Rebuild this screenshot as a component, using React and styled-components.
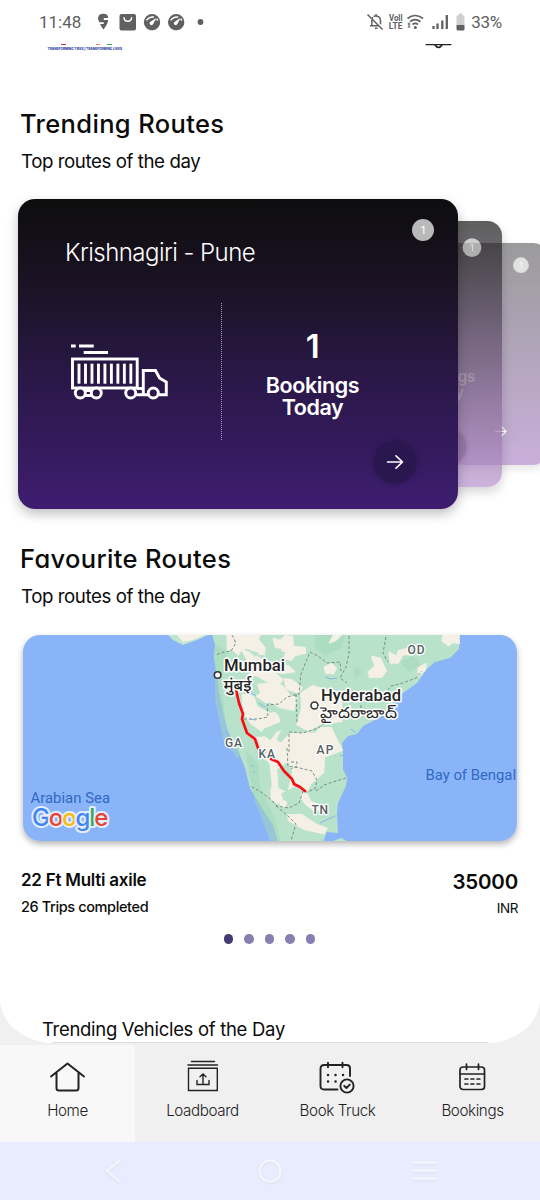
import React from 'react';
import styled, { createGlobalStyle } from 'styled-components';

const GlobalStyle = createGlobalStyle`
  * { box-sizing: border-box; }
  body { margin: 0; background: #fff; }
`;

const inter = 'Inter, "Liberation Sans", sans-serif';

const Screen = styled.div`
  width: 540px;
  height: 1200px;
  display: flex;
  flex-direction: column;
  overflow: hidden;
  background: #f0f0f0;
  font-family: ${inter};
  color: #0b0b0b;
`;

const StatusBar = styled.header`
  height: 44px;
  flex: none;
  display: flex;
  align-items: center;
  justify-content: space-between;
  padding: 0 38px 0 39px;
  background: #fff;
  color: #606060;
  font: 400 17px Roboto, sans-serif;
`;

const StatusGroup = styled.div`
  display: flex;
  align-items: center;
  height: 44px;
  gap: ${(p) => p.$gap || 0}px;
`;

const Clock = styled.span`
  width: 57px;
`;

const Percent = styled.span`
  letter-spacing: -0.3px;
`;

const Page = styled.main`
  flex: none;
  height: 999px;
  background: #fff;
  border-radius: 0 0 54px 54px / 0 0 44px 44px;
  display: flex;
  flex-direction: column;
`;

const HeaderPeek = styled.div`
  height: 8px;
  display: flex;
  justify-content: space-between;
  padding: 0 88px 0 47px;
`;

const Section = styled.section`
  padding: 0 22px 0 21px;
  margin-top: ${(p) => p.$top}px;
`;

const Title = styled.h2`
  margin: 0 0 0 -1px;
  font: 450 25.5px/36px ${inter};
  font-feature-settings: "cv11" 1;
  letter-spacing: 0.35px;
`;

const Subtitle = styled.p`
  margin: 8px 0 0;
  font: 400 18.7px/24px ${inter};
  letter-spacing: -0.43px;
`;

const CardStack = styled.div`
  position: relative;
  height: 310px;
  margin: 25px 0 0 18px;
`;

const Card = styled.article`
  position: absolute;
  top: 0;
  left: ${(p) => p.$left}px;
  width: 440px;
  height: 310px;
  border-radius: 17px;
  padding: 20px 24px 22px 48px;
  display: grid;
  grid-template-columns: 156px 1fr;
  grid-template-rows: 66px 1fr;
  color: #fff;
  background: ${(p) => p.$fill};
  opacity: ${(p) => p.$opacity};
  transform: scale(${(p) => p.$scale});
  transform-origin: right center;
  box-shadow: 0 5px 12px rgba(0, 0, 0, 0.25);
`;

const CardHead = styled.div`
  grid-column: 1 / 3;
  display: flex;
  align-items: flex-start;
  justify-content: space-between;
`;

const RouteName = styled.h3`
  margin: 17px 0 0 -1px;
  font: 350 24px/34px ${inter};
  letter-spacing: -0.55px;
`;

const Badge = styled.span`
  width: 22px;
  height: 22px;
  border-radius: 50%;
  background: #b9b9b9;
  font: 400 11px/22px ${inter};
  text-align: center;
`;

const Vehicle = styled.div`
  margin: 18px 0 49px;
  height: 137px;
  padding: 39px 0 0 4px;
  border-right: 1px dotted #a59ab8;
`;

const Stats = styled.div`
  display: flex;
  flex-direction: column;
  align-items: center;
  padding: 40px 31px 0 0;
  font: 600 21.5px/22px ${inter};
  letter-spacing: -0.4px;
  text-align: center;
`;

const Count = styled.strong`
  font: 600 33px/42px ${inter};
  margin-bottom: 7px;
`;

const StatLabel = styled.span`
  white-space: pre-line;
`;

const GoButton = styled.button`
  position: absolute;
  right: 42px;
  bottom: 26px;
  width: 42px;
  height: 42px;
  border: 0;
  border-radius: 50%;
  padding: 0;
  display: grid;
  place-items: center;
  background: ${(p) => p.$tint};
  box-shadow: 0 0 4px 1px ${(p) => p.$tint};
`;

const MapFrame = styled.div`
  width: 494px;
  height: 206px;
  margin: 26px 0 0 2px;
  border-radius: 17px;
  overflow: hidden;
  box-shadow: 0 3px 6px rgba(0, 0, 0, 0.3);
  svg { display: block; }
`;

const TripRow = styled.div`
  display: flex;
  justify-content: space-between;
  margin-top: 27px;
`;

const TripSide = styled.div`
  display: flex;
  flex-direction: column;
  align-items: ${(p) => (p.$end ? 'flex-end' : 'flex-start')};
`;

const VehicleName = styled.span`
  font: 600 17px/24px ${inter};
  letter-spacing: -0.25px;
`;

const Trips = styled.span`
  margin-top: 4px;
  font: 450 14.5px/22px ${inter};
  letter-spacing: -0.38px;
`;

const Price = styled.span`
  margin-top: 1px;
  font: 600 20.5px/26px ${inter};
  letter-spacing: -0.2px;
`;

const Currency = styled.span`
  margin-top: 3px;
  font: 400 13.5px/20px ${inter};
  letter-spacing: -0.4px;
`;

const Dots = styled.div`
  display: flex;
  gap: 11px;
  justify-content: center;
  margin: 16px 0 0;
`;

const Dot = styled.i`
  width: 9.6px;
  height: 9.6px;
  border-radius: 50%;
  background: ${(p) => (p.$on ? '#443b72' : '#8580b0')};
`;

const NextSection = styled.h4`
  margin: 72px 0 0;
  padding-left: 42px;
  font: 400 18.5px/26px ${inter};
  letter-spacing: -0.3px;
`;

const Divider = styled.div`
  height: 1px;
  margin: auto 52px 0;
  background: #dedede;
`;

const TabBar = styled.nav`
  flex: none;
  height: 97px;
  margin-top: 2px;
  display: grid;
  grid-template-columns: repeat(4, 135px);
  background: #f0f0f0;
`;

const Tab = styled.div`
  display: flex;
  flex-direction: column;
  align-items: center;
  padding-top: 14px;
  background: ${(p) => (p.$active ? '#f8f8f8' : 'transparent')};
  color: #222;
  font: 300 15.2px/20px ${inter};
  letter-spacing: -0.4px;
  svg { display: block; margin-bottom: 5px; }
`;

const SystemNav = styled.footer`
  flex: 1;
  display: grid;
  grid-template-columns: 226px 88px 1fr;
  justify-items: center;
  align-items: center;
  padding-right: 4px;
  background: #e9ecff;
  svg { filter: drop-shadow(0 1px 1px #dcdeec); }
`;

const line = { fill: 'none', stroke: 'currentColor', strokeLinecap: 'round', strokeLinejoin: 'round' };

function Gauge() {
  return (
    <svg width="17" height="17" viewBox="0 0 17 17">
      <circle cx="8.5" cy="8.5" r="8.2" fill="#606060" />
      <path d="M3 6.7Q5.5 2.8 10.5 3.3M13.2 5.2l.9 1.7" fill="none" stroke="#fff" strokeWidth="1.5" />
      <path d="M13 4 9.8 10A1.9 1.9 0 1 1 7.4 7.7Z" fill="#fff" />
    </svg>
  );
}

function Status() {
  return (
    <StatusBar>
      <StatusGroup>
        <Clock>11:48</Clock>
        <svg width="113" height="20" viewBox="96 12 113 20">
          <path d="M103.3 13.8q4.8 0 4.9 4.3h-4.4v1.8h4.3q0 3.6-4.7 9.6-2.3-2.9-3.3-5.4h3.7v-1.9h-4.4q-1.5-2.2-1.3-4.2.4-4.2 5.2-4.2Z" fill="#606060" />
          <rect x="119.5" y="14" width="16.5" height="16.5" rx="2" fill="#606060" />
          <path d="M124 17.2q0 4 3.8 4t3.8-4" fill="none" stroke="#fff" strokeWidth="1.5" />
          <g transform="translate(143.5 13.7)"><Gauge /></g>
          <g transform="translate(167.7 13.7)"><Gauge /></g>
          <circle cx="200.5" cy="22" r="2.9" fill="#606060" />
        </svg>
      </StatusGroup>
      <StatusGroup $gap={5}>
        <svg width="99" height="20" viewBox="367 12 99 20">
          <g {...line} stroke="#606060" strokeWidth="1.5" strokeLinecap="butt">
            <path d="M367.5 14.5l15 15M370 25.8h9M371.8 25.5V20.5q0-2 1-3.2M373.5 16.3q6.6-1.4 7 4.3v3.6M376 14v2M374.8 28.3h2.8" />
          </g>
          <g fontFamily="Roboto, sans-serif" fontSize="8.2" fontWeight="700" fill="#606060">
            <text x="389" y="20.8" textLength="13.5" lengthAdjust="spacingAndGlyphs">Voll</text>
            <text x="388.8" y="28.8" textLength="13.7" lengthAdjust="spacingAndGlyphs">LTE</text>
          </g>
          <g {...line} stroke="#606060" strokeWidth="1.7" strokeLinecap="butt">
            <path d="M407.5 18.5q7.5-6 15.5 0M410 21.7q5-4 10.5 0M412.5 24.5q2.8-2.2 5.5 0" />
          </g>
          <circle cx="415.3" cy="27.5" r="1.5" fill="#606060" />
          <path d="M409 22.5v5M407.7 24h2.6M407.7 27h2.6" stroke="#606060" strokeWidth="1.1" />
          <path d="M433.5 29v-3M437.5 29v-5.5M442.3 29v-8.5M446.8 29V15" stroke="#606060" strokeWidth="2.3" />
          <path d="M459 15v-1.5h3V15q2.5 0 2.5 1.8V25h-8v-8.2q0-1.8 2.5-1.8Z" fill="#cfcfcf" />
          <path d="M456.5 25h8v4q0 1.5-1.5 1.5h-5q-1.5 0-1.5-1.5Z" fill="#606060" />
        </svg>
        <Percent>33%</Percent>
      </StatusGroup>
    </StatusBar>
  );
}

function Truck() {
  return (
    <svg width="100" height="60" viewBox="70 342 100 60" fill="none" stroke="#fff" strokeWidth="2.9">
      <path d="M71 346h4.7M79 346h14.7M83.7 352.5H108M158.5 394.7h7.8V382l-6.8-4-4-7.5h-12.2v24.2h5M135 394.7h8M85 390.5h7M85 395.5h7" />
      <rect x="72.5" y="359" width="64.7" height="29" />
      {[0, 1, 2, 3, 4, 5, 6, 7, 8].map((i) => (
        <path key={i} d={`M${79 + i * 6.48} 363.7v20`} />
      ))}
      <path d="M137 388.5h6" />
      {[80.3, 96.3, 130.7, 153.3].map((x) => (
        <circle key={x} cx={x} cy="393" r="5" fill="#2b184c" />
      ))}
    </svg>
  );
}

function BookingCard({ route, count, tint, ...look }) {
  return (
    <Card {...look}>
      <CardHead>
        <RouteName>{route}</RouteName>
        <Badge>1</Badge>
      </CardHead>
      <Vehicle><Truck /></Vehicle>
      <Stats>
        <Count>{count}</Count>
        <StatLabel>{'Bookings\nToday'}</StatLabel>
      </Stats>
      <GoButton aria-label="Open route" $tint={tint}>
        <svg width="18" height="16" viewBox="0 0 18 16" {...line} stroke="#fff" strokeWidth="1.6">
          <path d="M1.5 8h15M10 1.8 16.5 8 10 14.2" />
        </svg>
      </GoButton>
    </Card>
  );
}

/* Terrain outlines, drawn on a grid three times finer than the map. */
const cream = [
  'M75 5H165L160 20 180 45 178 65 150 62 130 45 110 50 85 35 97 24Z',
  'M66 8l24 0-6 20 24 22-8 16-22-20-10 8Z',
  'M205 16l20 6 16-14 22 2 2 30 35 4 2 16-32 8-12 14-20-6 4-20-30-8Z',
  'M110 50l28 10 30 18 40 16 42 4 20 18-38 6-30-8 32 26-12 14-36-8-30-18-26-4 20-10 28-4-20-16-30-10Z',
  'M238 138l22 2 32 24-14 16-34-12Z',
  'M158 154l40-4 34 8 22 28 22 10-10 36-40-8-30-18-26 8-22-22 20-10Z',
  'M112 184l28 4 20 18 34 16 26 28 10 36-18 34 34 26-20 24-34-14-36-14-6-28 52-4-36-18-30-22-22-32Z',
  'M288 180l36-22 24 8 4 104-40 24-36-18 14-52Z',
  'M350 165l60 20 0 80-60 8Z',
  'M220 338l36-36 76-2 14-16 32 0 34 68-54 20-2 46-38 34-12 22-24-22-66 34-18 14 4-44-6-62-20-26Z',
  'M198 470l20-12 8 20 6 20-14 14-18-14Z',
  'M290 480l18 4 8 20 30 14 2 12-20 4-28-22-12-20Z',
  'M248 546l40-2 46 30 32 12-10 16-56-12-48-26Z',
  'M226 512a9 9 0 1 0 18 0 9 9 0 1 0-18 0Z',
  'M358 102l22-10 14 14-8 16-24-2Z',
  'M500 70l26 6 18 38-14 18-36 2-4-16 20-18Z',
  'M552 58l24 12 4-16 28-8 16 20-30-2-14 26-24 0Z',
  'M640 104l24-12-4 20-20 18Z',
  'M715 6l46 0 2 26-20-4-12 10-20-14Z',
  'M385 8l24-2-16 16-20 8Z',
];
const forest = [
  'M30 30l38 30-20 80 18 160 40 60-6 20-45-60-25-120Z',
  'M120 350l40 40 4 66 44 100 20 74-30 0-50-130Z',
  'M330 6l90 0-10 40-50 20-30-20Z',
  'M445 110l20-6 6 20-20 12Z',
  'M585 84l40-14 26 26-40 22Z',
];
const clearings = [
  'M150 190l46 32 30 10-30 6-38-20ZM178 288l50-20 20 14-34 14-18 24-26-20ZM218 410l30-20 12 26-14 60-24-12ZM210 45l20 6-10 8ZM268 20l18 10-12 8ZM130 52l30 8-10 10Z',
];

function RouteMap() {
  const halo = { stroke: '#fff', strokeWidth: 3, strokeLinejoin: 'round', paintOrder: 'stroke' };
  const roboto = 'Roboto, "Noto Sans", sans-serif';
  return (
    <svg width="494" height="206" viewBox="23 635 494 206">
      <rect x="23" y="635" width="494" height="206" fill="#8ab4f8" />
      <path d="M168 635l5 5 10 5 14-5 11-5Z" fill="#bfe5ce" />
      <path d="M177 635l6 7 10-2 12-5Z" fill="#f4f0e6" />
      <path
        fill="#b9e2cb"
        d="M212 634l3 11-1 13 3 17 2 17 4 20 5 20 9 16 8 20 5 20 12 20 11 17 5 17h45l4-10 11 1-1-20 1-10 8-17 1-8-4-9v-16l-1-10 6-7 9-2 6-8 20-10 20-23 14-10 10-14 8-7 15-4 9-9 1-14Z"
      />
      <path d="M333 841l8-3 6 3Z" fill="#b9e2cb" />
      <g transform="translate(205 633) scale(.3333)">
        {forest.map((d) => <path key={d} d={d} fill="#a2d8b8" opacity=".5" />)}
        {cream.map((d) => <path key={d} d={d} fill="#f4f0e6" stroke="#f4f0e6" strokeWidth="4" strokeLinejoin="round" />)}
        {clearings.map((d) => <path key={d} d={d} fill="#b9e2cb" stroke="#b9e2cb" strokeWidth="3" strokeLinejoin="round" />)}
      </g>
      <g fill="none" stroke="#71877c" strokeWidth=".9" strokeDasharray="3 2">
        <path d="M232 635l4 8-5 8-7 1-9 3M244 719h14l10-2-1-12 12-1 8-7 12-3 2-20 9-22 8 4 9 7 13-1 1 9M349 636v17l-3 14-6 11 7 5M386 637l-3 16 5 9M296 694l1 28M289 752v-20l14 1 15-5 19-14 7-7M287 748l1 18 12 2 12 3 5 9-2 9-8 3M291 762l6 0 0 4-6 3M316 791l8-6 12-4 10-3M303 791l-4 12-10 5-12-2-8-8-8-6-11-6M276 806l11 9 9 9-5 17M372 702l12-7 7-9 12-3 13-5 6-7M361 700v16" />
      </g>
      <g fill="none" stroke="#82b5ea" strokeWidth="1"><path d="M325 677l6 2 6-1M250 692l6 4M259 703l6 4M249 719l7 1M320 823l15-7M340 756l5-1M351 729l5 4M251 765l3 2M253 773l2-2" /></g>
      <path d="M236 690l3 13 4 11-1 5 5 14 8 6 3 9M271 759l7 3 6 9 8 8 2 5 6 3 5 4" fill="none" stroke="#f80d12" strokeWidth="2.7" strokeLinejoin="round" strokeLinecap="round" />
      <g fill="#f9fbfa" stroke="#353535" strokeWidth="1.6">
        <circle cx="217.6" cy="675" r="3.3" />
        <circle cx="314.5" cy="705.5" r="3.5" />
      </g>
      <g fontFamily={roboto} fontWeight="500" fontSize="16.2" fill="#242424" {...halo}>
        <text x="224" y="671" textLength="61" lengthAdjust="spacingAndGlyphs">Mumbai</text>
        <text x="223.5" y="690.5" textLength="28" lengthAdjust="spacingAndGlyphs" fontSize="15.5">मुंबई</text>
        <text x="321" y="701" textLength="80" lengthAdjust="spacingAndGlyphs">Hyderabad</text>
        <text x="320" y="718" textLength="77" lengthAdjust="spacingAndGlyphs" fontSize="15.5">హైదరాబాద్</text>
      </g>
      <g fontFamily={roboto} fontWeight="500" fontSize="12" fill="#555d61" {...halo} strokeWidth="2.5">
        <text x="225" y="747" textLength="17">GA</text>
        <text x="258.5" y="757.5" textLength="16.5">KA</text>
        <text x="316.5" y="754" textLength="17">AP</text>
        <text x="311.5" y="813.5" textLength="16.5">TN</text>
        <text x="407.5" y="653.5" textLength="17">OD</text>
      </g>
      <g fontFamily={roboto} fontSize="14.5" fill="#3069c5">
        <text x="30.5" y="803" textLength="79.5" lengthAdjust="spacingAndGlyphs">Arabian Sea</text>
        <text x="425.5" y="780" textLength="90.5" lengthAdjust="spacingAndGlyphs">Bay of Bengal</text>
      </g>
      <text x="32" y="826" fontFamily="Inter, sans-serif" fontWeight="500" fontSize="24" letterSpacing="-1.15" stroke="#e4eefc" strokeWidth="4" strokeLinejoin="round" paintOrder="stroke">
        <tspan fill="#4285f4">G</tspan><tspan fill="#ea4335">o</tspan><tspan fill="#fbbc05">o</tspan><tspan fill="#4285f4">g</tspan><tspan fill="#34a853">l</tspan><tspan fill="#ea4335">e</tspan>
      </text>
    </svg>
  );
}

const tabs = [
  {
    label: 'Home',
    active: true,
    icon: <g strokeWidth="2"><path d="M3 17.5 19.5 4.5 36 17.5M8.5 14v15q0 2.5 2.5 2.5h17q2.5 0 2.5-2.5V14" /></g>,
  },
  {
    label: 'Loadboard',
    icon: (
      <g strokeWidth="1.4" strokeLinejoin="miter">
        <path d="M8.5 2.5h23M5 6h29.5M5.5 9.3h28.8v22.2H5.5ZM20 25V15.2M17 17.7l3-2.7 3 2.7M14 21.5V25.5h12V21.5" />
      </g>
    ),
  },
  {
    label: 'Book Truck',
    icon: (
      <g strokeWidth="1.9">
        <path d="M19.5 30.5H6q-3.5 0-3.5-3.5V9.5Q2.5 6 6 6h22.5Q32 6 32 9.5V17M10 3.7v4.5M24.5 3.7v4.5" />
        <circle cx="29" cy="27" r="6.6" />
        <path d="m26.2 26.8 2.2 2.2 3.4-3.4" />
        <path d="M10 16h.1M17.5 16h.1M25 16h.1M10 22.5h.1M17.5 22.5h.1" strokeWidth="2.4" />
      </g>
    ),
  },
  {
    label: 'Bookings',
    icon: (
      <g strokeWidth="1.7">
        <rect x="7" y="8" width="24.5" height="22.5" rx="3" />
        <path d="M7 15h24.5M13.5 5v5.5M25.5 5v5.5M12 20h2.8M18 20h2.8M24 20h2.8M12 25h2.8M18 25h2.8M24 25h2.8" />
      </g>
    ),
  },
];

export default function App() {
  return (
    <Screen>
      <GlobalStyle />
      <Status />
      <Page>
        <HeaderPeek>
          <svg width="76" height="8" viewBox="47 44 76 8">
            <path d="M61 44.5h5" stroke="#b3305b" /><path d="M96 44.5h4" stroke="#df8460" /><path d="M107 44.5h5" stroke="#4f9c5b" />
            <text x="47.5" y="49.7" fontFamily="Inter, sans-serif" fontWeight="800" fontSize="3.6" fill="#2f3fa5" textLength="74.5" lengthAdjust="spacingAndGlyphs">TRANSFORMING TIRES | TRANSFORMING LIVES</text>
          </svg>
          <svg width="27" height="6" viewBox="0 0 27 6" {...line} stroke="#222">
            <path d="M1 .6h25" strokeWidth="1.1" /><path d="M10 1q3.5 5 7 0" strokeWidth="1.6" />
          </svg>
        </HeaderPeek>
        <Section $top={54}>
          <Title>Trending Routes</Title>
          <Subtitle>Top routes of the day</Subtitle>
        </Section>
        <CardStack>
          <BookingCard route="Krishnagiri - Pune" count="1" tint="rgba(90, 50, 120, 0.25)" $left={88} $scale={0.716} $opacity={0.415} $fill="linear-gradient(#111, #7f41aa)" />
          <BookingCard route="Krishnagiri - Pune" count="1" tint="rgba(70, 40, 90, 0.35)" $left={44} $scale={0.858} $opacity={0.67} $fill="linear-gradient(#111, #b68ecb)" />
          <BookingCard route="Krishnagiri - Pune" count="1" tint="#2b174f" $left={0} $scale={1} $opacity={1} $fill="linear-gradient(#0d0d0e, #1c1326 30%, #2b184a 60%, #3e1d70)" />
        </CardStack>
        <Section $top={32}>
          <Title>Favourite Routes</Title>
          <Subtitle>Top routes of the day</Subtitle>
          <MapFrame><RouteMap /></MapFrame>
          <TripRow>
            <TripSide>
              <VehicleName>22 Ft Multi axile</VehicleName>
              <Trips>26 Trips completed</Trips>
            </TripSide>
            <TripSide $end>
              <Price>35000</Price>
              <Currency>INR</Currency>
            </TripSide>
          </TripRow>
          <Dots>
            {[0, 1, 2, 3, 4].map((i) => <Dot key={i} $on={i === 0} />)}
          </Dots>
        </Section>
        <NextSection>Trending Vehicles of the Day</NextSection>
        <Divider />
      </Page>
      <TabBar>
        {tabs.map((t) => (
          <Tab key={t.label} $active={t.active}>
            <svg width="39" height="37" viewBox="0 0 39 37" {...line}>{t.icon}</svg>
            {t.label}
          </Tab>
        ))}
      </TabBar>
      <SystemNav>
        <svg width="18" height="24" viewBox="0 0 18 24" {...line} stroke="#f6f6fd" strokeWidth="2"><path d="M15 2 3 12l12 10" /></svg>
        <svg width="26" height="26" viewBox="0 0 26 26" {...line} stroke="#f6f6fd" strokeWidth="2.2"><circle cx="13" cy="13" r="10.5" /></svg>
        <svg width="28" height="24" viewBox="0 0 28 24" {...line} stroke="#f6f6fd" strokeWidth="2"><path d="M2 3.5h24M2 11.5h24M2 19.5h24" /></svg>
      </SystemNav>
    </Screen>
  );
}
